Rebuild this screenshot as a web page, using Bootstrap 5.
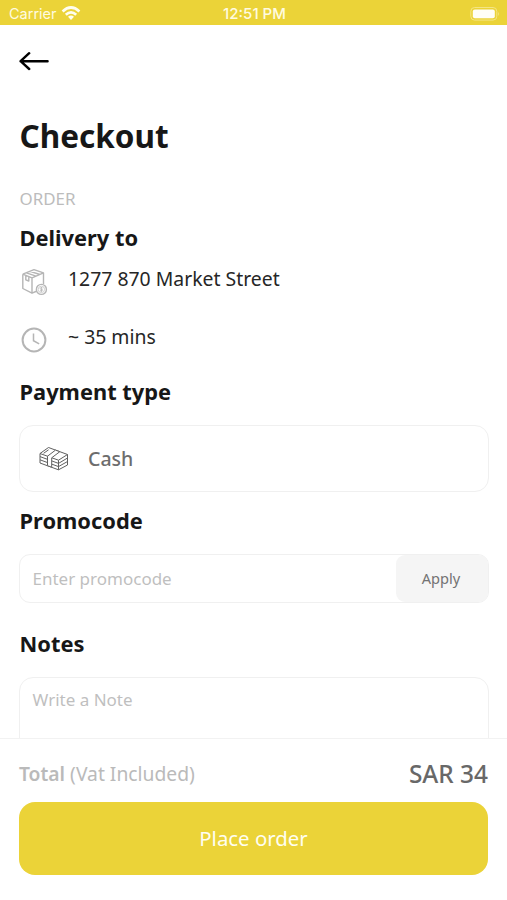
<!DOCTYPE html>
<html lang="en">
<head>
<meta charset="utf-8">
<meta name="viewport" content="width=device-width, initial-scale=1">
<title>Checkout</title>
<link href="https://cdn.jsdelivr.net/npm/bootstrap@5.3.0/dist/css/bootstrap.min.css" rel="stylesheet">
<style>
  body { font-family: "Noto Sans", sans-serif; color: #171717; background: #fff; }
  .screen { height: 900px; }
  .yellow { background: #ebd338; }
  .status { height: 25px; font: 500 15px/25px Inter, sans-serif; color: #fffbe0; padding: 2px 7px 0 9px; }
  .status .carrier { font-weight: 400; font-size: 14.5px; }
  .topbar { height: 72px; padding-left: 19px; }
  .content { padding: 0 19px 0 20px; }
  .title { font-size: 31.5px; font-weight: 700; line-height: 78px; margin: 0 0 0 -.5px; }
  .eyebrow { font-size: 16.9px; line-height: 25px; color: #bcbcbc; margin: 11px 0 0 -.5px; }
  .section { font-size: 21.85px; font-weight: 700; line-height: 30px; margin: 0 0 0 -.5px; }
  .deliver { margin-top: 12px; }
  .pay, .code { margin-top: 14px; }
  .code { line-height: 29px; padding-bottom: 1px; }
  .notes { margin-top: 26px; }
  .info { height: 52px; font-size: 19.4px; color: #262626; }
  .info + .info { margin-top: 6px; }
  .info svg { width: 28px; height: 28px; margin: 5px 20px 0 0; }
  .box { border: 1px solid #f0f0f0; border-radius: 14px; margin: 18px -1px 0; }
  .cash { height: 67px; font-size: 19.5px; font-weight: 500; color: #6d6d6d; padding-left: 19px; }
  .cash svg { margin-right: 19px; }
  .promo { height: 49px; border-radius: 11px; }
  .field { border: 0; outline: 0; background: none; padding: 0 0 0 12.5px; font-size: 17px; color: #555; }
  .field::placeholder { color: #bfbfbf; opacity: 1; }
  .apply { width: 92px; background: #f5f5f5; border: 0; border-radius: 9px; font-size: 14.6px; color: #737373; padding: 0 2px 0 0; }
  .note { height: 90px; resize: none; padding-top: 9px; line-height: 26px; display: block; }
  .total-bar { border-top: 1px solid #f2f2f2; height: 162px; padding: 0 19px 25px; }
  .total-line { padding-top: 7px; }
  .vat { font-size: 19.3px; color: #bababa; }
  .vat b { font-weight: 600; }
  .amount { font-size: 24.4px; font-weight: 500; color: #686868; }
  .place { height: 73px; border: 0; border-radius: 16px; font-size: 20.4px; color: #fffef0; }
</style>
</head>
<body>
<div class="screen d-flex flex-column overflow-hidden">
  <div class="status yellow d-flex align-items-center flex-shrink-0">
    <div class="col d-flex align-items-center gap-1">
      <span class="carrier">Carrier</span>
      <svg width="20" height="15" viewBox="0 0 20 15" fill="none" stroke="#fffef0" stroke-width="2.7"><path d="M1.6 5.4Q10-2.4 18.4 5.4M4.8 8.8Q10 4 15.2 8.8"/><path d="M7 10.8Q10 8.3 13 10.8L10 14Z" fill="#fffef0" stroke="none"/></svg>
    </div>
    <span class="clock">12:51 PM</span>
    <div class="col d-flex justify-content-end">
      <svg width="30" height="14" viewBox="0 0 30 14"><rect x=".8" y=".5" width="26" height="12.6" rx="3.8" fill="none" stroke="#f4e584"/><rect x="2.8" y="2.6" width="22" height="8.6" rx="2" fill="#fffef5"/><path d="M28.2 4.7q1.8 2.1 0 4.2z" fill="#f4e584"/></svg>
    </div>
  </div>
  <main class="flex-fill overflow-hidden">
    <div class="topbar d-flex align-items-center">
      <svg width="30" height="20" viewBox="0 0 30 20" fill="none" stroke="#000" stroke-width="2.4" stroke-linecap="round" stroke-linejoin="round"><path d="M1.6 10.2H28.6M10.2 2.2L1.6 10.2L10.2 18"/></svg>
    </div>
    <div class="content">
      <h1 class="title">Checkout</h1>
      <div class="eyebrow">ORDER</div>
      <h2 class="section deliver">Delivery to</h2>
      <div class="info d-flex align-items-center">
        <svg viewBox="0 0 28 28" fill="none" stroke="#b5b5b5" stroke-width="1.4" stroke-linejoin="round"><path d="M2.8 6.2L14 1.7L23.5 4.9V16M2.8 6.2L12 9.8L23.5 4.9M2.8 6.2V20.5L12 25.2L17 23M12 9.8V25.2M6.4 4.9L16 8.2M10 3.4L20 6.5M5.8 7.6V11.8L8.8 13V8.8"/><circle cx="21.4" cy="21.4" r="5" fill="#fff"/><circle cx="21.4" cy="21.4" r="3.2" stroke-width=".6"/><path d="M22.6 20q-2.4-1-2.4.4t2.2 1.2q.7 1.7-2.4 1.2M21.4 19v5" stroke-width=".8"/></svg>
        <span>1277 870 Market Street</span>
      </div>
      <div class="info d-flex align-items-center">
        <svg viewBox="0 0 28 28" fill="none" stroke="#b5b5b5"><circle cx="14" cy="14" r="11.4" stroke-width="2"/><path d="M13.5 7.5V14.7L19.2 17.8" stroke-width="1.5"/></svg>
        <span>~ 35 mins</span>
      </div>
      <h2 class="section pay">Payment type</h2>
      <div class="box cash d-flex align-items-center">
        <svg width="30" height="26" viewBox="0 0 30 26" fill="#fff" stroke="#606060" stroke-width="1" stroke-linejoin="round"><path d="M1 7.5L9.5 1.5L28.5 8.5V19L19.5 23.8L1 17Z"/><path d="M1 7.5L19.5 14.2L28.5 8.5M1 10.6L19.5 17.4L28.5 12M1 13.8L19.5 20.6L28.5 15.5M19.5 14.2V23.8M4.6 7.3L9.6 3.8" fill="none"/><path d="M8.5 10.2L16.5 4.1L20.8 5.7L12.7 11.8V21.2L8.5 19.7Z"/></svg>
        <span>Cash</span>
      </div>
      <h2 class="section code">Promocode</h2>
      <div class="box promo d-flex align-items-stretch">
        <input class="field flex-fill" type="text" placeholder="Enter promocode" aria-label="Promocode">
        <button class="apply" type="button">Apply</button>
      </div>
      <h2 class="section notes">Notes</h2>
      <div class="box"><textarea class="field note w-100" placeholder="Write a Note" aria-label="Notes"></textarea></div>
    </div>
  </main>
  <footer class="total-bar bg-white flex-shrink-0 d-flex flex-column">
    <div class="total-line flex-fill d-flex align-items-center justify-content-between">
      <span class="vat"><b>Total</b> (Vat Included)</span>
      <span class="amount">SAR 34</span>
    </div>
    <button class="place yellow w-100 flex-shrink-0" type="button">Place order</button>
  </footer>
</div>
<script src="https://cdn.jsdelivr.net/npm/bootstrap@5.3.0/dist/js/bootstrap.bundle.min.js"></script>
</body>
</html>
